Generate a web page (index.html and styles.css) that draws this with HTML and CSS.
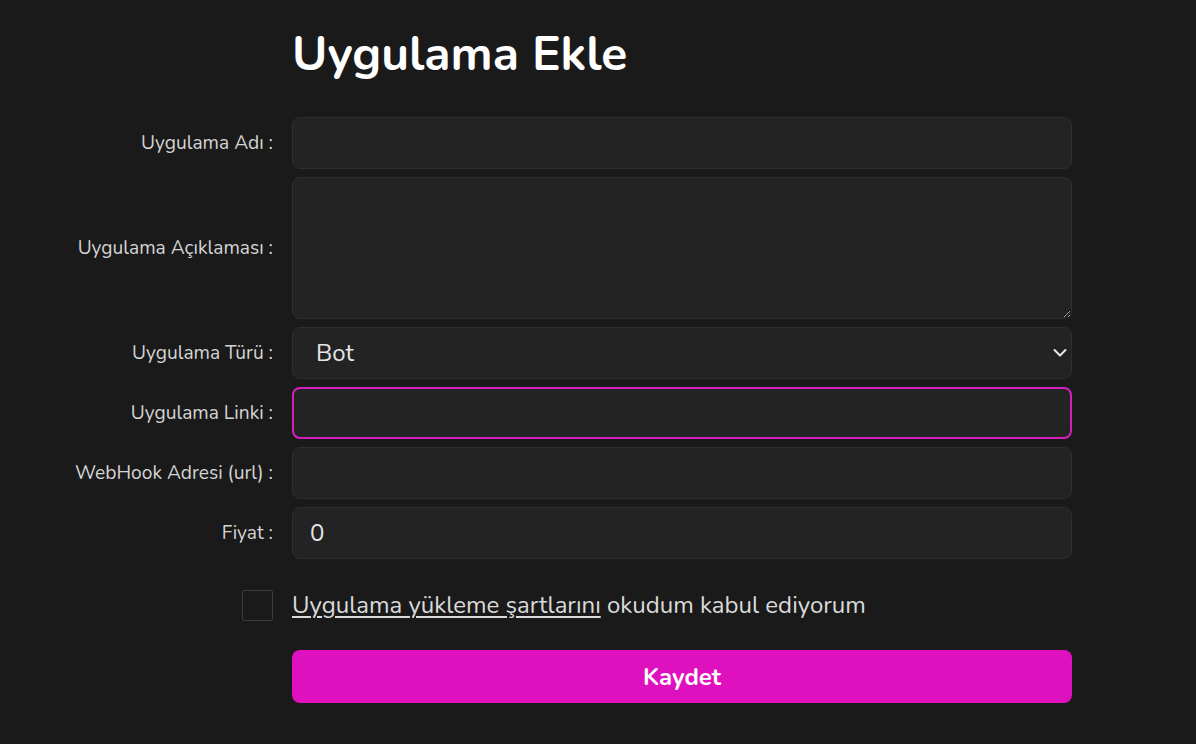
FILE: index.html
```html
<!DOCTYPE html>
<html lang="tr">
<head>
<meta charset="utf-8">
<title>Uygulama Ekle</title>
<link rel="stylesheet" href="styles.css">
</head>
<body>
<main class="page">
  <h1 class="title">Uygulama Ekle</h1>
  <form class="form">
    <div class="row">
      <label class="label" for="ad">Uygulama Adı :</label>
      <input class="control" id="ad" type="text">
    </div>
    <div class="row">
      <label class="label" for="aciklama">Uygulama Açıklaması :</label>
      <textarea class="control area" id="aciklama"></textarea>
    </div>
    <div class="row">
      <label class="label" for="tur">Uygulama Türü :</label>
      <div class="select-wrap">
        <select class="control select" id="tur"><option>Bot</option></select>
        <svg class="chev" width="14" height="10" viewBox="0 0 14 10"><path d="M1.5 2l5.5 5.5 5.5-5.5" fill="none" stroke="#e8e8e8" stroke-width="2" stroke-linecap="round" stroke-linejoin="round"/></svg>
      </div>
    </div>
    <div class="row">
      <label class="label" for="link">Uygulama Linki :</label>
      <input class="control focus" id="link" type="text">
    </div>
    <div class="row">
      <label class="label" for="hook">WebHook Adresi (url) :</label>
      <input class="control" id="hook" type="text">
    </div>
    <div class="row">
      <label class="label" for="fiyat">Fiyat :</label>
      <input class="control" id="fiyat" type="text" value="0">
    </div>
    <div class="row check-row">
      <input class="check" type="checkbox" id="kabul">
      <span class="check-text"><a class="terms" href="#">Uygulama yükleme şartlarını</a> okudum kabul ediyorum</span>
    </div>
    <div class="row btn-row">
      <span></span>
      <button class="save" type="button">Kaydet</button>
    </div>
  </form>
</main>
</body>
</html>
```

FILE: styles.css
```css
* { box-sizing: border-box; }
html, body { margin: 0; padding: 0; }
body {
  background: #1a1a1a;
  font-family: "Nunito", "Noto Sans", "Open Sans", sans-serif;
  color: #e6e6e6;
  width: 1196px;
  height: 744px;
  overflow: hidden;
}
.page {
  padding-top: 24px;
}
.title {
  margin: 0 0 33px 292px;
  font-size: 48px;
  font-weight: 700;
  color: #ffffff;
  line-height: 60px;
}
.form {
  display: flex;
  flex-direction: column;
  gap: 8px;
}
.row {
  display: grid;
  grid-template-columns: 273px 780px;
  column-gap: 19px;
  align-items: center;
}
.label {
  text-align: right;
  font-size: 19.2px;
  color: #d4d4d4;
}
.control {
  width: 780px;
  height: 52px;
  background: #232323;
  border: 1px solid #2e2e2e;
  border-radius: 8px;
  color: #e6e6e6;
  font-family: inherit;
  font-size: 24px;
  padding: 6px 17px;
  outline: none;
}
.area {
  height: 142px;
  resize: vertical;
  display: block;
}
.select-wrap { position: relative; width: 780px; }
.select {
  appearance: none;
  -webkit-appearance: none;
  display: block;
  padding-left: 23px;
}
.chev {
  position: absolute;
  right: 5px;
  top: 21px;
  pointer-events: none;
}
.focus {
  border: 2px solid #d41ebd;
}
.check-row {
  margin-top: 23px;
}
.check {
  appearance: none;
  -webkit-appearance: none;
  width: 31px;
  height: 31px;
  margin: 0;
  justify-self: end;
  border: 1px solid #3c3c3c;
  border-radius: 2px;
  background: #1a1a1a;
}
.check-text {
  font-size: 24px;
  line-height: 31px;
  color: #dadada;
}
.terms {
  color: #dadada;
  text-decoration: underline;
  text-underline-offset: 3px;
}
.btn-row { margin-top: 21px; }
.save {
  width: 780px;
  height: 53px;
  border: none;
  border-radius: 8px;
  background: #df10be;
  color: #ffffff;
  font-family: inherit;
  font-size: 24px;
  font-weight: 700;
}
```
